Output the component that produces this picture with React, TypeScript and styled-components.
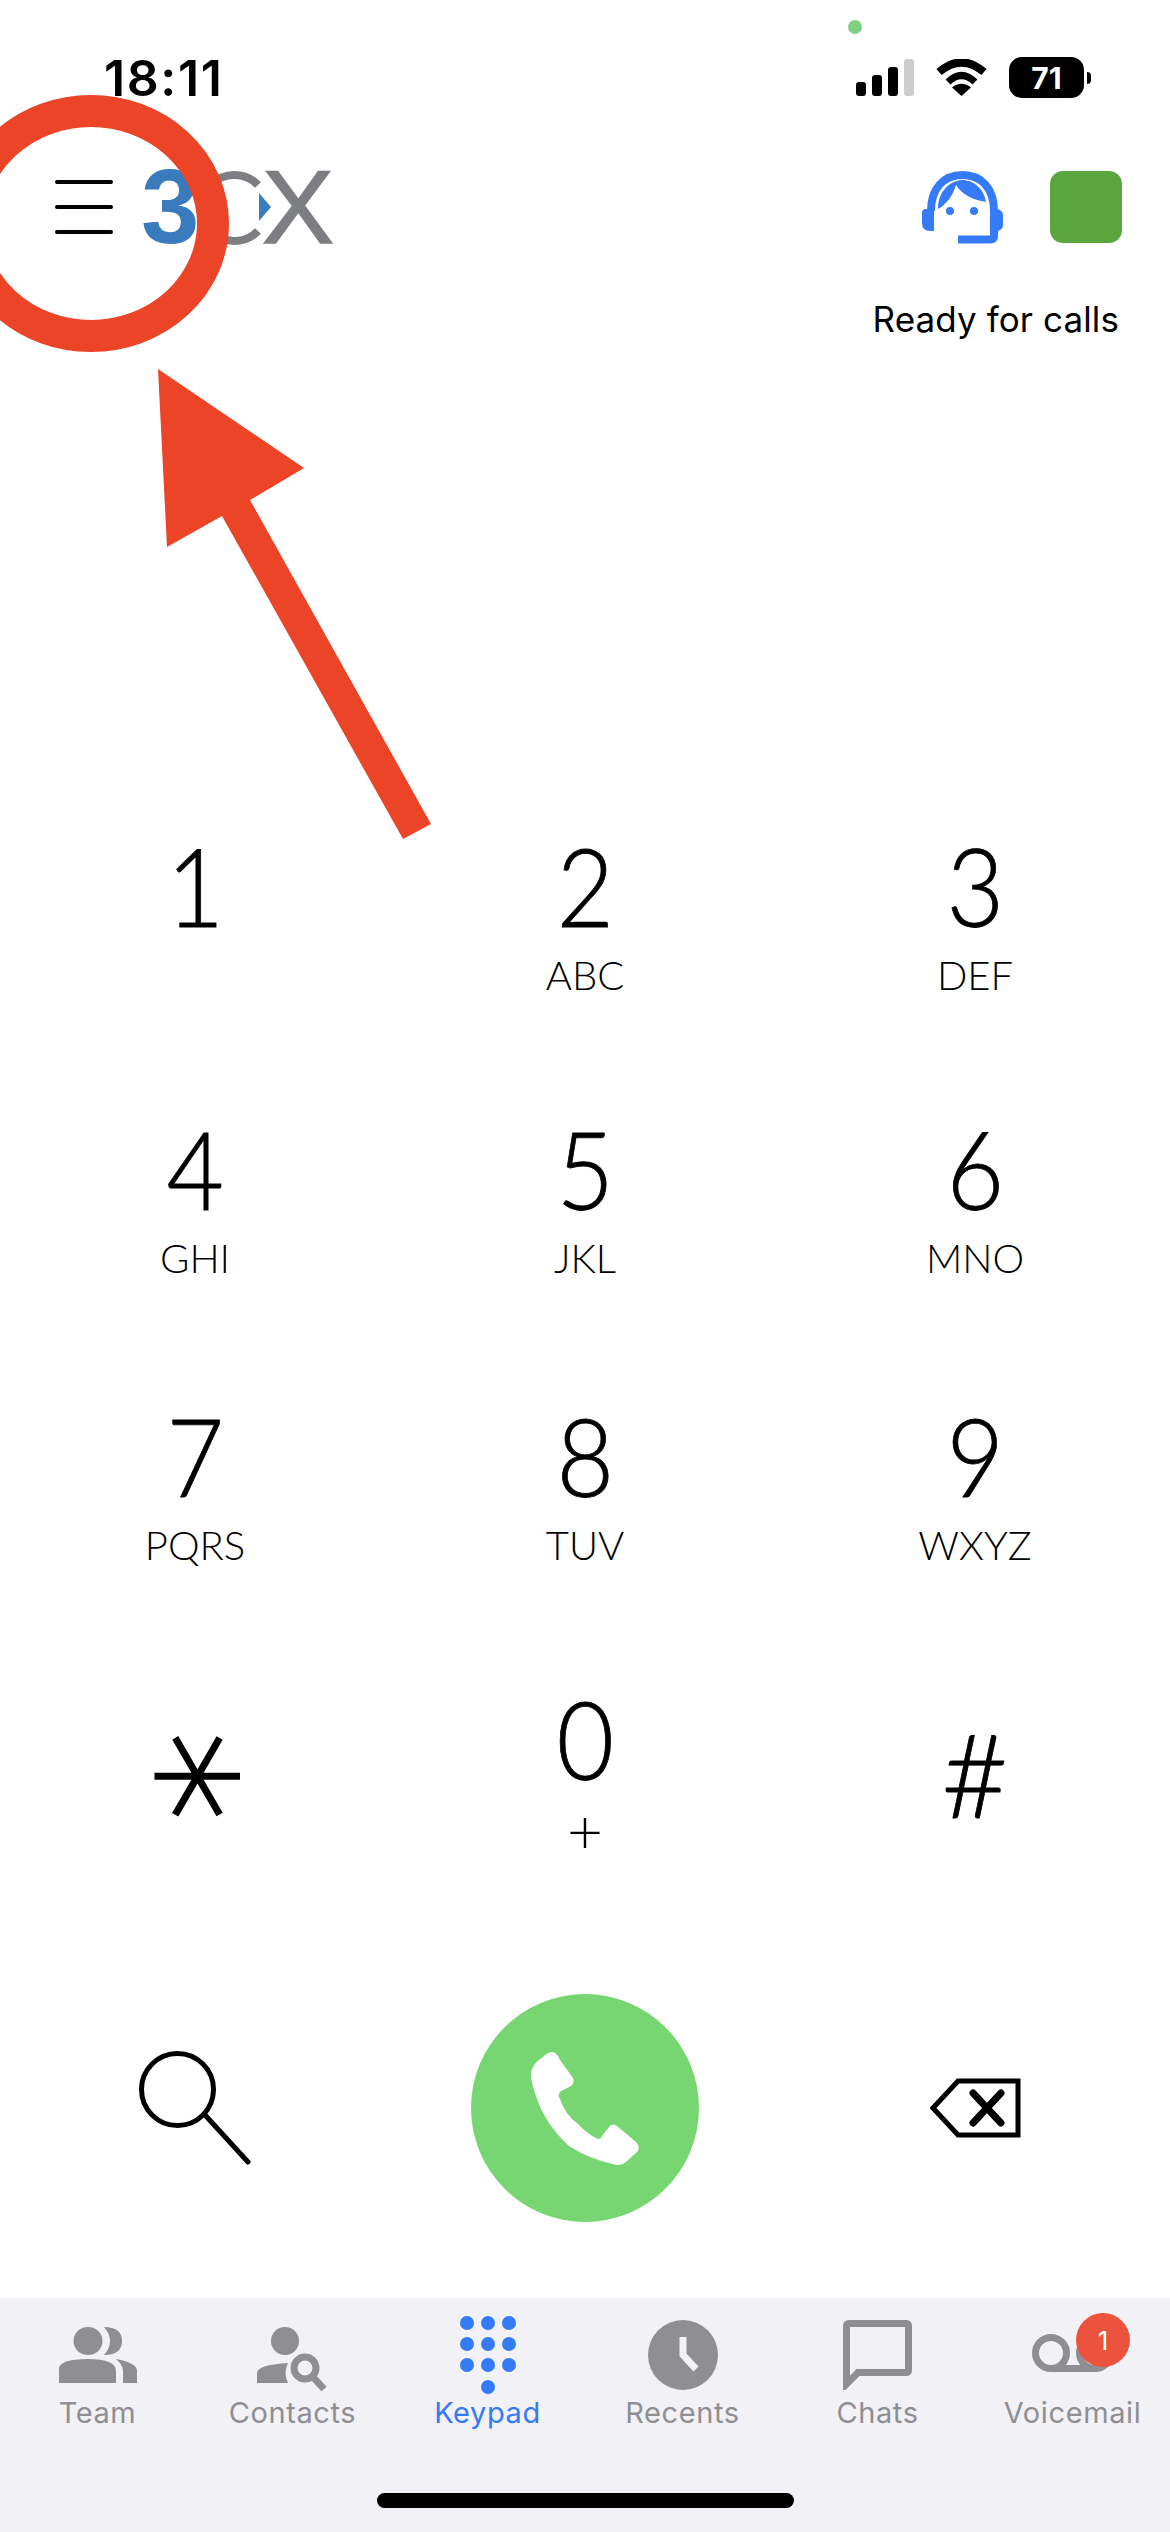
import * as React from 'react';
import styled, { createGlobalStyle } from 'styled-components';

const GlobalStyle = createGlobalStyle`
    html, body {
        margin: 0;
        padding: 0;
        background: #fff;
    }
`;

const Page = styled.div`
    position: relative;
    width: 1170px;
    height: 2532px;
    overflow: hidden;
    background: #fff;
    color: #000;
    font-family: Inter, "Liberation Sans", sans-serif;
    display: flex;
    flex-direction: column;
`;

const StatusBar = styled.div`
    height: 171px;
    flex: none;
    box-sizing: border-box;
    padding: 20px 79px 0 104px;
    display: flex;
    justify-content: space-between;
    align-items: flex-start;
`;

const Clock = styled.div`
    font-size: 50px;
    line-height: 50px;
    margin-top: 33px;
    font-weight: 600;
    letter-spacing: 1.6px;
`;

const StatusRight = styled.div`
    display: flex;
    flex-direction: column;
    align-items: flex-start;
`;

const GreenDot = styled.div`
    width: 14px;
    height: 14px;
    border-radius: 50%;
    background: #7dd181;
    margin: 0 0 23px -8px;
`;

const StatusIcons = styled.div`
    display: flex;
    align-items: center;
    height: 41px;
`;

const Signal = styled.div`
    display: flex;
    align-items: flex-end;
    gap: 6px;
    height: 37px;
    margin-right: 22px;
`;

const SignalBar = styled.div<{ $h: number; $off?: boolean }>`
    width: 10px;
    height: ${p => p.$h}px;
    border-radius: 3px;
    background: ${p => (p.$off ? '#cccccc' : '#000')};
`;

const Battery = styled.div`
    width: 75px;
    height: 41px;
    margin-left: 22px;
    border-radius: 13px;
    background: #000;
    color: #fff;
    font-size: 30px;
    font-weight: 700;
    display: flex;
    align-items: center;
    justify-content: center;
`;

const BatteryNub = styled.div`
    width: 4px;
    height: 12px;
    margin-left: 3px;
    border-radius: 0 6px 6px 0;
    background: #000;
`;

const Header = styled.div`
    flex: none;
    height: 181px;
    box-sizing: border-box;
    padding: 0 48px 0 55px;
    display: flex;
    justify-content: space-between;
    align-items: flex-start;
`;

const HeaderLeft = styled.div`
    display: flex;
    align-items: flex-start;
    gap: 31px;
`;

const Hamburger = styled.div`
    width: 58px;
    display: flex;
    flex-direction: column;
    gap: 21px;
    padding-top: 9px;
`;

const HamburgerLine = styled.div`
    height: 4px;
    border-radius: 2px;
    background: #000;
`;

const LogoSvg = styled.svg`
    display: block;
    margin: -25px 0 0 -6px;
`;

const HeaderRight = styled.div`
    display: flex;
    flex-direction: column;
    align-items: flex-end;
`;

const HeaderIcons = styled.div`
    display: flex;
    align-items: flex-start;
    gap: 47px;
`;

const Avatar = styled.div`
    width: 72px;
    height: 72px;
    border-radius: 13px;
    background: #58a63d;
`;

const ReadyLabel = styled.div`
    margin-top: 54px;
    margin-right: 3px;
    font-size: 35px;
    line-height: 42px;
    letter-spacing: 0.1px;
`;

const Keys = styled.div`
    flex: none;
    margin-top: 495px;
    display: grid;
    grid-template-columns: repeat(3, 390px);
    grid-template-rows: 283px 287px 283px 144px;
`;

const Key = styled.div`
    display: flex;
    flex-direction: column;
    align-items: center;
`;

const Digit = styled.div`
    height: 76px;
    line-height: 76px;
    font-family: Lato, "Liberation Sans", sans-serif;
    font-weight: 300;
    font-size: 108px;
    transform: scaleX(0.92);
    -webkit-text-stroke: 0.8px #000;
`;

const Letters = styled.div`
    margin-top: 33px;
    font-family: Lato, "Liberation Sans", sans-serif;
    font-weight: 300;
    font-size: 40px;
    line-height: 38px;
`;

const Plus = styled.div`
    margin-top: 31px;
    font-family: Lato, "Liberation Sans", sans-serif;
    font-weight: 300;
    font-size: 62px;
    line-height: 44px;
`;

const Star = styled.div`
    margin-top: 39px;
    height: 75px;
    line-height: 75px;
    font-family: "DejaVu Sans", sans-serif;
    font-weight: 200;
    font-size: 180px;
    transform: translate(-29px, 0) rotate(90deg);
    -webkit-text-stroke: 3px #000;
`;

const Hash = styled.div`
    margin-top: 31px;
    height: 85px;
    line-height: 85px;
    font-family: Lato, "Liberation Sans", sans-serif;
    font-weight: 300;
    font-size: 116px;
    -webkit-text-stroke: 0.8px #000;
`;

const ActionRow = styled.div`
    flex: none;
    display: grid;
    grid-template-columns: repeat(3, 390px);
    margin-top: 150px;
    height: 228px;
    justify-items: center;
    align-items: center;
`;

const CallButton = styled.div`
    width: 228px;
    height: 228px;
    border-radius: 50%;
    background: #78d672;
    display: flex;
    align-items: center;
    justify-content: center;
`;

const TabBar = styled.div`
    position: relative;
    flex: none;
    margin-top: 76px;
    height: 234px;
    background: #f1f1f6;
    display: grid;
    grid-template-columns: repeat(6, 195px);
`;

const Tab = styled.div<{ $active?: boolean }>`
    position: relative;
    height: 135px;
    display: flex;
    flex-direction: column;
    align-items: center;
    color: ${p => (p.$active ? '#357af6' : '#8e8e93')};
`;

const TabIcon = styled.div`
    height: 97px;
    width: 100%;
    display: flex;
    justify-content: center;
    align-items: flex-start;
`;

const TabLabel = styled.div`
    font-size: 29px;
    line-height: 36px;
    letter-spacing: 0.6px;
`;

const Badge = styled.div`
    position: absolute;
    top: 15px;
    left: 101px;
    width: 54px;
    height: 54px;
    border-radius: 50%;
    background: #ec533f;
    color: #fff;
    font-size: 26px;
    display: flex;
    align-items: center;
    justify-content: center;
`;

const HomeIndicator = styled.div`
    position: absolute;
    left: 377px;
    top: 195px;
    width: 417px;
    height: 15px;
    border-radius: 8px;
    background: #000;
`;

// the red markup drawn over the screenshot
const Markup = styled.svg`
    position: absolute;
    left: 0;
    top: 0;
    pointer-events: none;
`;

const TabSvg = styled.svg<{ $top: number }>`
    display: block;
    margin-top: ${p => p.$top}px;
`;

const WifiIcon = () => (
    <svg width="51" height="37" viewBox="0 0 51 37">
        <path d="M3 13Q25.5-6 48 13" fill="none" stroke="#000" strokeWidth="8" />
        <path d="M12 23Q25.5 10 39 23" fill="none" stroke="#000" strokeWidth="7" />
        <path d="M25.5 37L16 28.5Q25.5 21 35 28.5Z" fill="#000" />
    </svg>
);

const AgentIcon = () => (
    <svg width="81" height="73" viewBox="0 0 81 73" fill="#357af6">
        <path d="M9 40C9 17 22 4 40.5 4C59 4 72 17 72 40" fill="none" stroke="#357af6" strokeWidth="8" />
        <path d="M4 38H12V60H8Q0 60 0 52V42Q0 38 4 38Z" />
        <path d="M72 38H76Q81 40 81 44V54Q81 58 76 60V65Q76 72.5 68 72.5H36V64.5H68V38Z" />
        <path d="M16 38C16 22 26 10 40 9C52 9 62 18 64 31C52 29 40 24 34 14C31 24 25 33 16 38Z" />
        <circle cx="28" cy="40" r="4" />
        <circle cx="52" cy="40" r="4" />
    </svg>
);

const LogoMark = () => (
    <LogoSvg width="200" height="120" viewBox="-6 -25 200 120">
        <text x="-3" y="72" fontFamily="Liberation Sans" fontWeight="700" fontSize="105" fill="#3a7bbd">3</text>
        <path d="M114 14A33 33 0 1 0 114 60" fill="none" stroke="#7d7e82" strokeWidth="8" />
        <path d="M115 22L127 36L115 50Z" fill="#3a7bbd" />
        <text x="118" y="72" fontFamily="Liberation Sans" fontSize="103" textLength="72" lengthAdjust="spacingAndGlyphs" fill="#7d7e82" stroke="#7d7e82" strokeWidth="1.5">X</text>
    </LogoSvg>
);

const PhoneIcon = () => (
    <svg width="108" height="113" viewBox="0 0 108 113" fill="#fff">
        <path d="M12 5Q19-2 24 1Q27 3 29 8L42 26Q44 31 40 34L30 39Q27 41 28 45Q35 64 46 71Q56 82 67 87Q70 87 71 84L79 74Q82 71 86 74L105 90Q109 94 107 99L96 109Q90 115 82 112Q58 107 38 94Q14 72 5 44Q-2 25 1 17Q4 10 12 5Z" />
    </svg>
);

const SearchIcon = () => (
    <svg width="112" height="114" viewBox="0 0 112 114" fill="none" stroke="#000">
        <circle cx="38.5" cy="38.5" r="36" strokeWidth="5" />
        <path d="M66 64L109 111" strokeWidth="5" strokeLinecap="round" />
    </svg>
);

const BackspaceIcon = () => (
    <svg width="91" height="60" viewBox="0 0 91 60" fill="none" stroke="#000">
        <path d="M28 3H88V57H28L3 30Z" strokeWidth="5" />
        <path d="M43 15L71 45M71 15L43 45" strokeWidth="7" strokeLinecap="round" />
    </svg>
);

const TeamIcon = () => (
    <TabSvg $top={29} width="78" height="56" viewBox="0 0 78 56" fill="currentColor">
        <ellipse cx="29" cy="14" rx="14.5" ry="14" />
        <path d="M0 56V42Q0 32 29 32Q57 32 57 44V56Z" />
        <path d="M45 0Q63 0 63 14Q63 28 45 28Q51 21 51 14Q51 7 45 0Z" />
        <path d="M57 32Q78 36 78 44V56H64V44Q64 38 57 32Z" />
    </TabSvg>
);

const ContactsIcon = () => (
    <TabSvg $top={29} width="72" height="64" viewBox="0 0 72 64" fill="currentColor">
        <ellipse cx="28" cy="14" rx="14" ry="14" />
        <path d="M0 56V46Q0 38 31 36Q26 46 31 56Z" />
        <circle cx="48" cy="41" r="11" fill="none" stroke="currentColor" strokeWidth="7" />
        <path d="M56 50L67 62" stroke="currentColor" strokeWidth="7" />
    </TabSvg>
);

const KeypadIcon = () => (
    <TabSvg $top={18} width="56" height="78" viewBox="0 0 56 78" fill="currentColor">
        <circle cx="7" cy="7" r="7" />
        <circle cx="28" cy="7" r="7" />
        <circle cx="49" cy="7" r="7" />
        <circle cx="7" cy="28" r="7" />
        <circle cx="28" cy="28" r="7" />
        <circle cx="49" cy="28" r="7" />
        <circle cx="7" cy="49" r="7" />
        <circle cx="28" cy="49" r="7" />
        <circle cx="49" cy="49" r="7" />
        <circle cx="28" cy="71" r="7" />
    </TabSvg>
);

const RecentsIcon = () => (
    <TabSvg $top={22} width="70" height="70" viewBox="0 0 70 70">
        <circle cx="35" cy="35" r="35" fill="currentColor" />
        <path d="M35 17V35L48 49" fill="none" stroke="#f1f1f6" strokeWidth="7" />
    </TabSvg>
);

const ChatsIcon = () => (
    <TabSvg $top={22} width="69" height="70" viewBox="0 0 69 70" fill="none" stroke="currentColor">
        <path d="M3.5 52V6Q3.5 3.5 6 3.5H63Q65.5 3.5 65.5 6V50Q65.5 52.5 63 52.5H15L3.5 64Z" strokeWidth="7" />
    </TabSvg>
);

const VoicemailIcon = () => (
    <TabSvg $top={36} width="82" height="38" viewBox="0 0 82 38" fill="none" stroke="currentColor">
        <ellipse cx="19" cy="19" rx="15.5" ry="15.5" strokeWidth="7" />
        <ellipse cx="63" cy="19" rx="15.5" ry="15.5" strokeWidth="7" />
        <path d="M19 34.5H63" strokeWidth="7" />
    </TabSvg>
);

const keys = [
    ['1', ''],
    ['2', 'ABC'],
    ['3', 'DEF'],
    ['4', 'GHI'],
    ['5', 'JKL'],
    ['6', 'MNO'],
    ['7', 'PQRS'],
    ['8', 'TUV'],
    ['9', 'WXYZ']
];

export default function App() {
    return (
        <Page>
            <GlobalStyle />
            <StatusBar>
                <Clock>18:11</Clock>
                <StatusRight>
                    <GreenDot />
                    <StatusIcons>
                        <Signal>
                            <SignalBar $h={14} />
                            <SignalBar $h={21} />
                            <SignalBar $h={29} />
                            <SignalBar $h={37} $off />
                        </Signal>
                        <WifiIcon />
                        <Battery>71</Battery>
                        <BatteryNub />
                    </StatusIcons>
                </StatusRight>
            </StatusBar>

            <Header>
                <HeaderLeft>
                    <Hamburger>
                        <HamburgerLine />
                        <HamburgerLine />
                        <HamburgerLine />
                    </Hamburger>
                    <LogoMark />
                </HeaderLeft>
                <HeaderRight>
                    <HeaderIcons>
                        <AgentIcon />
                        <Avatar />
                    </HeaderIcons>
                    <ReadyLabel>Ready for calls</ReadyLabel>
                </HeaderRight>
            </Header>

            <Keys>
                {keys.map(([digit, letters]) => (
                    <Key key={digit}>
                        <Digit>{digit}</Digit>
                        {letters && <Letters>{letters}</Letters>}
                    </Key>
                ))}
                <Key>
                    <Star>*</Star>
                </Key>
                <Key>
                    <Digit>0</Digit>
                    <Plus>+</Plus>
                </Key>
                <Key>
                    <Hash>#</Hash>
                </Key>
            </Keys>

            <ActionRow>
                <SearchIcon />
                <CallButton>
                    <PhoneIcon />
                </CallButton>
                <BackspaceIcon />
            </ActionRow>

            <TabBar>
                <Tab>
                    <TabIcon><TeamIcon /></TabIcon>
                    <TabLabel>Team</TabLabel>
                </Tab>
                <Tab>
                    <TabIcon><ContactsIcon /></TabIcon>
                    <TabLabel>Contacts</TabLabel>
                </Tab>
                <Tab $active>
                    <TabIcon><KeypadIcon /></TabIcon>
                    <TabLabel>Keypad</TabLabel>
                </Tab>
                <Tab>
                    <TabIcon><RecentsIcon /></TabIcon>
                    <TabLabel>Recents</TabLabel>
                </Tab>
                <Tab>
                    <TabIcon><ChatsIcon /></TabIcon>
                    <TabLabel>Chats</TabLabel>
                </Tab>
                <Tab>
                    <TabIcon><VoicemailIcon /></TabIcon>
                    <TabLabel>Voicemail</TabLabel>
                    <Badge>1</Badge>
                </Tab>
                <HomeIndicator />
            </TabBar>

            <Markup width="1170" height="2532" viewBox="0 0 1170 2532">
                <ellipse cx="91" cy="223.5" rx="122" ry="112.5" fill="none" stroke="#ec4426" strokeWidth="32" />
                <path d="M158 369L304 468L250 500L431 824L403 839L222 516L167 547Z" fill="#ec4426" />
            </Markup>
        </Page>
    );
}
